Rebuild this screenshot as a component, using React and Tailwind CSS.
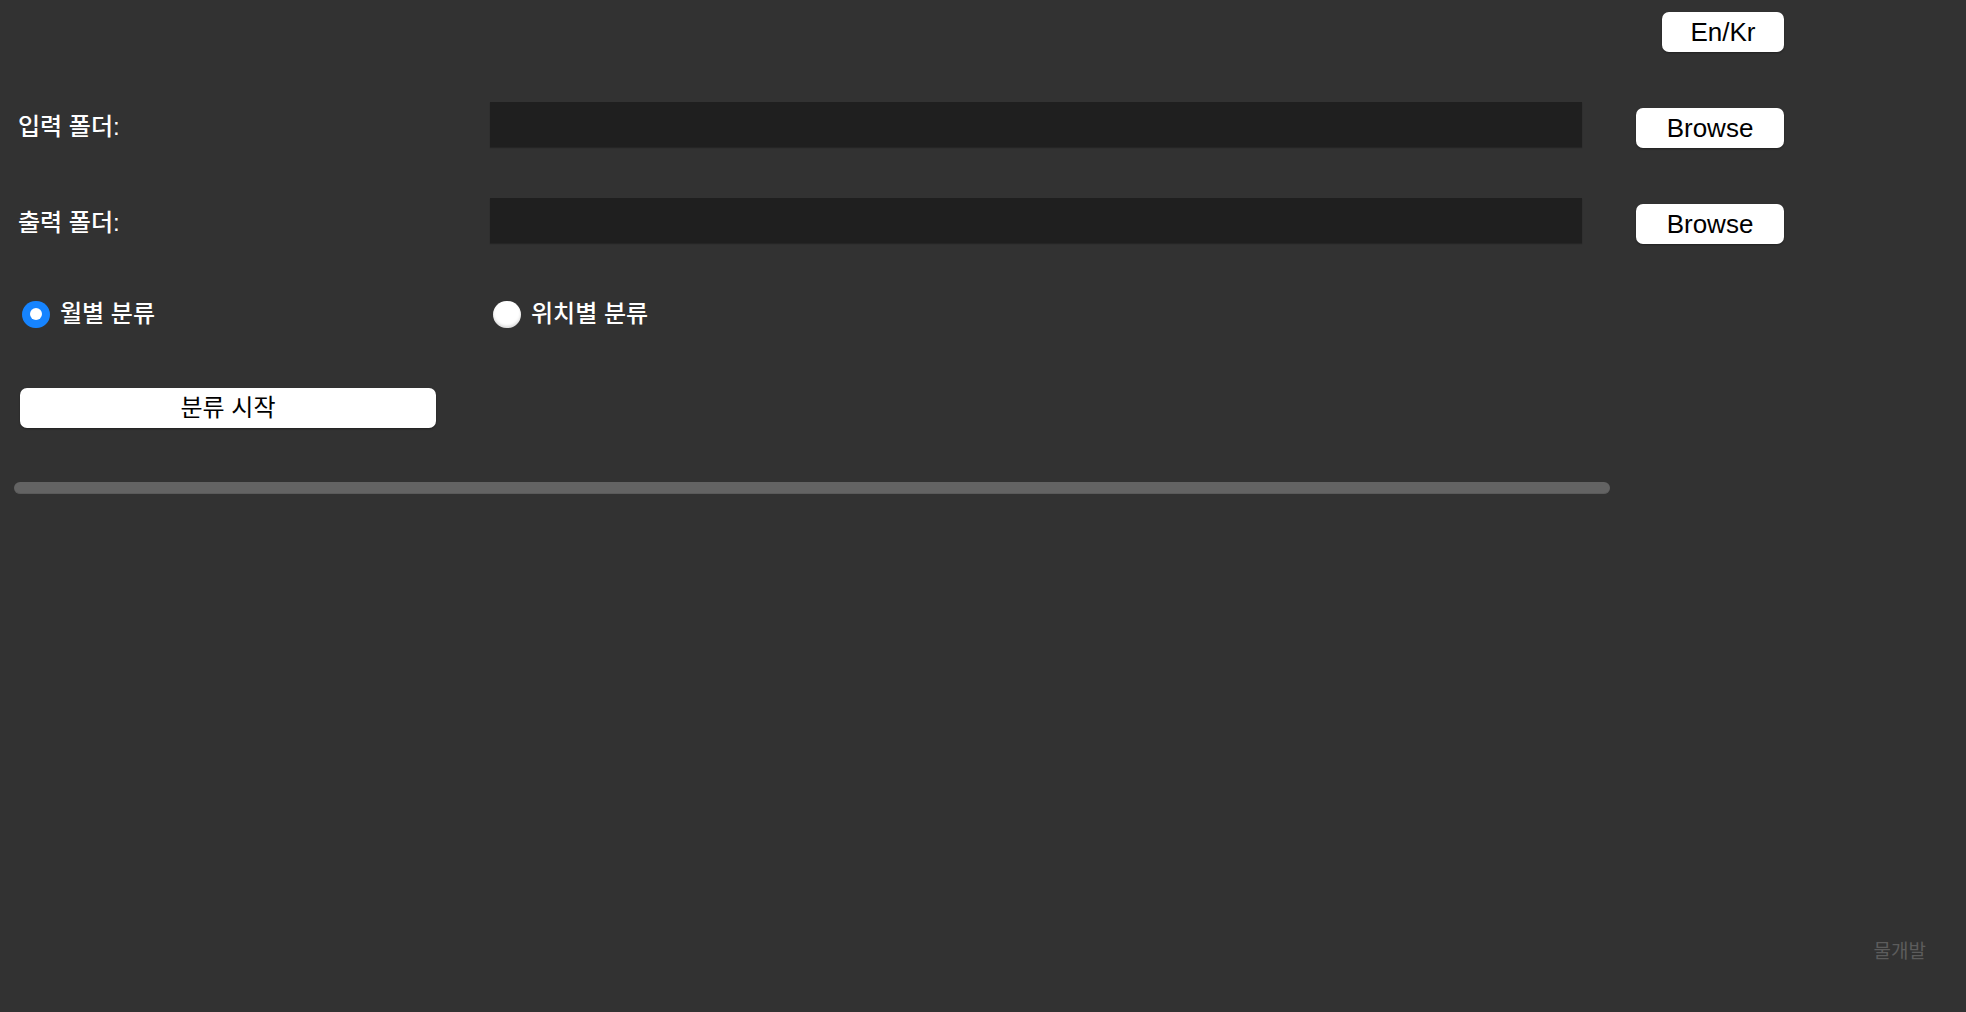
import { useState } from "react";

const FONT = { fontFamily: '"Liberation Sans", "Noto Sans CJK KR", sans-serif' };

function FolderRow({ label }) {
  return (
    <div className="flex items-start h-[46px]">
      <div className="w-[472px] h-[46px] pt-[3px] flex items-center text-[24px] font-medium text-white">{label}</div>
      <div className="w-[1092px] h-[45px] bg-[#1f1f1f] shadow-[0_1px_1px_rgba(0,0,0,0.25)]" />
      <button className="ml-[54px] mt-[6px] w-[148px] h-[40px] bg-white rounded-[7px] text-[26px] text-black leading-none shadow-[0_1px_2px_rgba(0,0,0,0.35)]">
        Browse
      </button>
    </div>
  );
}

function Radio({ checked, label, onClick }) {
  return (
    <button onClick={onClick} className="flex items-center h-[28px] gap-[10px] text-[24px] font-medium leading-none text-white">
      {checked ? (
        <span className="w-[28px] h-[27px] rounded-full bg-[#1684ff] flex items-center justify-center">
          <span className="w-[12px] h-[12px] rounded-full bg-white" />
        </span>
      ) : (
        <span className="w-[28px] h-[27px] rounded-full bg-white shadow-[inset_0_-2px_3px_rgba(0,0,0,0.15)]" />
      )}
      <span>{label}</span>
    </button>
  );
}

export default function App() {
  const [mode, setMode] = useState("month");

  return (
    <div className="min-h-screen h-[1012px] bg-[#323232] relative overflow-hidden" style={FONT}>
      {/* Language toggle */}
      <div className="flex justify-end pr-[182px] pt-[12px]">
        <button className="w-[122px] h-[40px] bg-white rounded-[7px] text-[26px] text-black leading-none shadow-[0_1px_2px_rgba(0,0,0,0.35)]">
          En/Kr
        </button>
      </div>

      {/* Folder rows */}
      <div className="pl-[18px] mt-[50px] flex flex-col gap-[50px]">
        <FolderRow label="입력 폴더:" />
        <FolderRow label="출력 폴더:" />
      </div>

      {/* Sort mode */}
      <div className="flex h-[28px] mt-[56px] pl-[22px]">
        <div className="w-[471px]">
          <Radio checked={mode === "month"} label="월별 분류" onClick={() => setMode("month")} />
        </div>
        <Radio checked={mode === "location"} label="위치별 분류" onClick={() => setMode("location")} />
      </div>

      {/* Start */}
      <div className="pl-[20px] mt-[60px]">
        <button className="w-[416px] h-[40px] bg-white rounded-[7px] text-[24px] text-black leading-none shadow-[0_1px_2px_rgba(0,0,0,0.35)]">
          분류 시작
        </button>
      </div>

      {/* Progress */}
      <div className="pl-[14px] mt-[54px]">
        <div className="w-[1596px] h-[12px] rounded-full bg-[#636363] border-b border-[#5a5a5a]" />
      </div>

      <div className="absolute right-[40px] bottom-[46px] text-[19px] text-[#5c5c5c]">물개발</div>
    </div>
  );
}
